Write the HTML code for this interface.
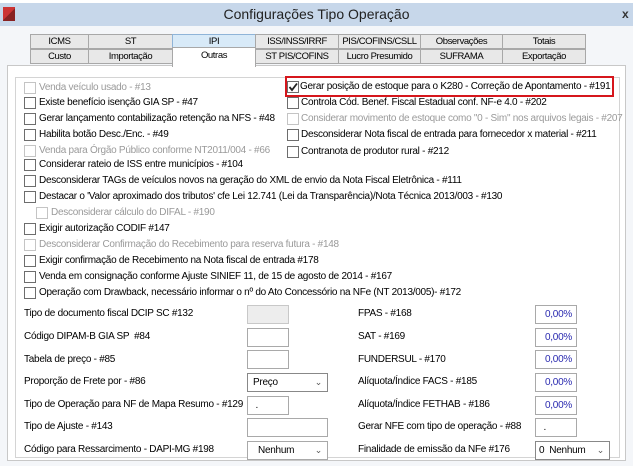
<!DOCTYPE html>
<html><head><meta charset="utf-8"><style>
*{margin:0;padding:0;box-sizing:border-box}
body{width:633px;height:466px;background:#fff;font-family:"Liberation Sans",sans-serif;font-size:10px;color:#000;position:relative;overflow:hidden;letter-spacing:-0.27px}
.a{position:absolute;white-space:nowrap}
.title{left:0;top:3px;width:633px;height:23px;background:#c7d7ea}
.tab{position:absolute;height:15px;border:1px solid #a8a8a8;background:#e8e8e8;text-align:center;line-height:13px;font-size:9.5px;letter-spacing:-0.4px;overflow:hidden;white-space:nowrap}
.cb{position:absolute;width:12px;height:12px;border:1px solid #6d6d6d;background:#fff}
.cb.d{border-color:#c4c4c4}
.t{position:absolute;white-space:nowrap;line-height:12px}
.g{color:#9a9a9a}
.in{position:absolute;height:19px;border:1px solid #a9a9a9;background:#fff;line-height:17px;padding-left:5px}
.pc{color:#2a2ab0;text-align:right;padding-right:4px}
.arr{position:absolute;right:5px;top:0;font-size:9px;color:#555}
</style></head><body>
<div class="a title"></div>
<div class="a" style="left:3px;top:7px;width:12px;height:14px;background:linear-gradient(135deg,#c33 0 50%,#822 50%)"></div>
<div class="a" style="left:0;top:6px;width:633px;text-align:center;font-size:14px;color:#222;letter-spacing:0">Configurações Tipo Operação</div>
<div class="a" style="left:622px;top:7px;font-size:12px;font-weight:bold;color:#333">x</div>
<div class="a" style="left:0;top:26px;width:633px;height:440px;background:#f4f6f9"></div>

<div class="tab" style="left:30px;top:34px;width:59px">ICMS</div>
<div class="tab" style="left:88px;top:34px;width:85px">ST</div>
<div class="tab" style="left:172px;top:34px;width:84px;background:#d8eaf8;border-color:#8fb4d8">IPI</div>
<div class="tab" style="left:255px;top:34px;width:84px">ISS/INSS/IRRF</div>
<div class="tab" style="left:338px;top:34px;width:83px">PIS/COFINS/CSLL</div>
<div class="tab" style="left:420px;top:34px;width:83px">Observações</div>
<div class="tab" style="left:502px;top:34px;width:84px">Totais</div>
<div class="tab" style="left:30px;top:49px;width:59px">Custo</div>
<div class="tab" style="left:88px;top:49px;width:85px">Importação</div>
<div class="tab" style="left:255px;top:49px;width:84px">ST PIS/COFINS</div>
<div class="tab" style="left:338px;top:49px;width:83px">Lucro Presumido</div>
<div class="tab" style="left:420px;top:49px;width:83px">SUFRAMA</div>
<div class="tab" style="left:502px;top:49px;width:84px">Exportação</div>

<div class="a" style="left:7px;top:65px;width:619px;height:396px;background:#fff;border:1px solid #c8c8c8"></div>
<div class="tab" style="left:172px;top:47px;width:84px;height:20px;background:#fff;border-bottom:none;line-height:15px">Outras</div>
<div class="a" style="left:15px;top:77px;width:605px;height:381px;border:1px solid #d4d4d4"></div>

<div class="a" style="left:285px;top:76px;width:329px;height:21px;border:2px solid #d6161c"></div>

<div class="cb d" style="left:24px;top:82px"></div><div class="t g" style="left:39px;top:82px">Venda veículo usado - #13</div>
<div class="cb" style="left:24px;top:97px"></div><div class="t" style="left:39px;top:97px">Existe benefício isenção GIA SP - #47</div>
<div class="cb" style="left:24px;top:113px"></div><div class="t" style="left:39px;top:113px">Gerar lançamento contabilização retenção na NFS - #48</div>
<div class="cb" style="left:24px;top:129px"></div><div class="t" style="left:39px;top:129px">Habilita botão Desc./Enc. - #49</div>
<div class="cb d" style="left:24px;top:145px"></div><div class="t g" style="left:39px;top:145px">Venda para Órgão Público conforme NT2011/004 - #66</div>
<div class="cb" style="left:24px;top:159px"></div><div class="t" style="left:39px;top:159px">Considerar rateio de ISS entre municípios - #104</div>
<div class="cb" style="left:24px;top:175px"></div><div class="t" style="left:39px;top:175px">Desconsiderar TAGs de veículos novos na geração do XML de envio da Nota Fiscal Eletrônica - #111</div>
<div class="cb" style="left:24px;top:191px"></div><div class="t" style="left:39px;top:191px">Destacar o 'Valor aproximado dos tributos' cfe Lei 12.741 (Lei da Transparência)/Nota Técnica 2013/003 - #130</div>
<div class="cb d" style="left:36px;top:207px"></div><div class="t g" style="left:51px;top:207px">Desconsiderar cálculo do DIFAL - #190</div>
<div class="cb" style="left:24px;top:223px"></div><div class="t" style="left:39px;top:223px">Exigir autorização CODIF #147</div>
<div class="cb d" style="left:24px;top:239px"></div><div class="t g" style="left:39px;top:239px">Desconsiderar Confirmação do Recebimento para reserva futura - #148</div>
<div class="cb" style="left:24px;top:255px"></div><div class="t" style="left:39px;top:255px">Exigir confirmação de Recebimento na Nota fiscal de entrada #178</div>
<div class="cb" style="left:24px;top:271px"></div><div class="t" style="left:39px;top:271px">Venda em consignação conforme Ajuste SINIEF 11, de 15 de agosto de 2014 - #167</div>
<div class="cb" style="left:24px;top:287px"></div><div class="t" style="left:39px;top:287px">Operação com Drawback, necessário informar o nº do Ato Concessório na NFe (NT 2013/005)- #172</div>

<div class="cb" style="left:287px;top:81px"><svg width="10" height="10" style="position:absolute;left:0;top:0"><path d="M1.5 5 L4 8 L9 1.5" stroke="#222" stroke-width="1.8" fill="none"/></svg></div><div class="t" style="left:300px;top:81px">Gerar posição de estoque para o K280 - Correção de Apontamento - #191</div>
<div class="cb" style="left:287px;top:97px"></div><div class="t" style="left:301px;top:97px">Controla Cód. Benef. Fiscal Estadual conf. NF-e 4.0 - #202</div>
<div class="cb d" style="left:287px;top:113px"></div><div class="t g" style="left:301px;top:113px">Considerar movimento de estoque como "0 - Sim" nos arquivos legais - #207</div>
<div class="cb" style="left:287px;top:129px"></div><div class="t" style="left:301px;top:129px">Desconsiderar Nota fiscal de entrada para fornecedor x material - #211</div>
<div class="cb" style="left:287px;top:146px"></div><div class="t" style="left:301px;top:146px">Contranota de produtor rural - #212</div>

<div class="t" style="left:24px;top:308px">Tipo de documento fiscal DCIP SC #132</div>
<div class="t" style="left:24px;top:331px">Código DIPAM-B GIA SP &nbsp;#84</div>
<div class="t" style="left:24px;top:354px">Tabela de preço - #85</div>
<div class="t" style="left:24px;top:376px">Proporção de Frete por - #86</div>
<div class="t" style="left:24px;top:399px">Tipo de Operação para NF de Mapa Resumo - #129</div>
<div class="t" style="left:24px;top:421px">Tipo de Ajuste - #143</div>
<div class="t" style="left:24px;top:444px">Código para Ressarcimento - DAPI-MG #198</div>

<div class="in" style="left:247px;top:305px;width:42px;background:#ededed;border-color:#c8c8c8"></div>
<div class="in" style="left:247px;top:328px;width:42px"></div>
<div class="in" style="left:247px;top:350px;width:42px"></div>
<div class="in" style="left:247px;top:373px;width:81px;border-color:#888">Preço<span class="arr">&#8964;</span></div>
<div class="in" style="left:247px;top:396px;width:42px">&nbsp;.</div>
<div class="in" style="left:247px;top:418px;width:81px"></div>
<div class="in" style="left:247px;top:441px;width:81px;padding-left:10px">Nenhum<span class="arr">&#8964;</span></div>

<div class="t" style="left:358px;top:308px">FPAS - #168</div>
<div class="t" style="left:358px;top:331px">SAT - #169</div>
<div class="t" style="left:358px;top:354px">FUNDERSUL - #170</div>
<div class="t" style="left:358px;top:376px">Alíquota/Índice FACS - #185</div>
<div class="t" style="left:358px;top:399px">Alíquota/Índice FETHAB - #186</div>
<div class="t" style="left:358px;top:421px">Gerar NFE com tipo de operação - #88</div>
<div class="t" style="left:358px;top:444px">Finalidade de emissão da NFe #176</div>

<div class="in pc" style="left:535px;top:305px;width:42px">0,00%</div>
<div class="in pc" style="left:535px;top:328px;width:42px">0,00%</div>
<div class="in pc" style="left:535px;top:350px;width:42px">0,00%</div>
<div class="in pc" style="left:535px;top:373px;width:42px">0,00%</div>
<div class="in pc" style="left:535px;top:396px;width:42px">0,00%</div>
<div class="in" style="left:535px;top:418px;width:42px">&nbsp;.</div>
<div class="in" style="left:535px;top:441px;width:75px;border-color:#888;padding-left:3px">0 &nbsp;Nenhum<span class="arr">&#8964;</span></div>
</body></html>
